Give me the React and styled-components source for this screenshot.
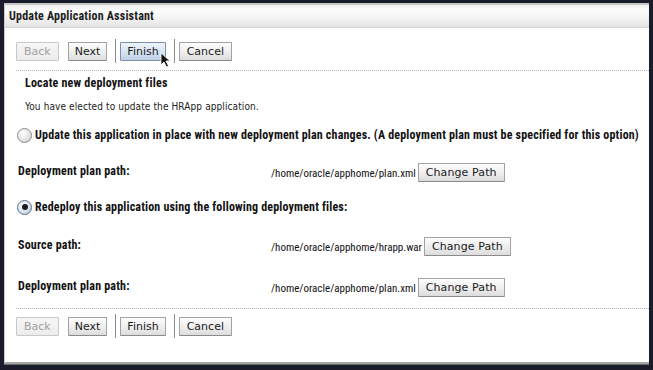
import React from 'react';
import styled, { createGlobalStyle, css } from 'styled-components';

const narrow = `"Roboto Condensed", "DejaVu Sans Condensed", "Liberation Sans", sans-serif`;
const dejavu = `"DejaVu Sans", "Liberation Sans", sans-serif`;
const dejavuCond = `"DejaVu Sans Condensed", "DejaVu Sans", sans-serif`;

const GlobalStyle = createGlobalStyle`
  html, body {
    margin: 0;
    padding: 0;
    background: #1a1c2c;
  }
  body {
    width: 653px;
    height: 370px;
    overflow: hidden;
  }
`;

/* ---> window frame */
const Panel = styled.div`
  position: relative;
  box-sizing: border-box;
  margin: 3px 0 0 4px;
  width: 645px;
  height: 361px;
  background: #fff;
  border-left: 1px solid #c9c9c9;
  border-top: 2px solid #c6c6c6;
  border-bottom: 2px solid #a4a4a4;
  box-shadow: 0 1px 0 #6a6a6a;
`;

const Header = styled.div`
  height: 22px;
  display: flex;
  align-items: center;
  padding-left: 4px;
  background: linear-gradient(#f2f2f2, #fcfcfc 30%, #e4e4e4);
  border-bottom: 1px solid #d4d4d4;
  font: bold 12px ${narrow};
  letter-spacing: 0.2px;
  color: #1e1e1e;
`;

const Body = styled.div`
  padding-left: 11px;
`;

/* ---> toolbar */
const Toolbar = styled.div`
  display: flex;
  align-items: center;
  height: 24px;
  margin-top: ${p => p.$top}px;
`;

const Button = styled.button`
  position: relative;
  box-sizing: border-box;
  height: 19px;
  padding: 0 ${p => p.$pad || 7}px;
  margin-right: ${p => p.$gap || 0}px;
  border: 1px solid #a2a2a2;
  border-bottom-color: #8a8a8a;
  border-radius: 1px;
  background: linear-gradient(#fdfdfd, #ececec 60%, #dcdcdc);
  font: 11px ${dejavu};
  letter-spacing: ${p => p.$spacing || 0}px;
  color: #1a1a1a;
  cursor: pointer;

  ${p => p.disabled && css`
    color: #a0a0a0;
    border-color: #c8c8c8;
    background: linear-gradient(#f6f6f6, #ececec);
    cursor: default;
  `}

  ${p => p.$active && css`
    border-color: #7e8ea6;
    background: linear-gradient(#eef4fb, #d6e3f2 55%, #bfd0e6);
  `}
`;

const Separator = styled.div`
  width: 1px;
  height: 24px;
  background: #8c8c8c;
  margin: 0 4px 0 8px;
`;

const Cursor = styled.svg`
  position: absolute;
  left: 39px;
  top: 9px;
  width: 11px;
  height: 16px;
  pointer-events: none;
`;

const Dotted = styled.div`
  margin-top: ${p => p.$top}px;
  border-top: 1px dotted #b4b4b4;
`;

/* ---> text */
const Heading = styled.div`
  margin: ${p => p.$top}px 0 0 9px;
  font: bold 12px ${narrow};
  letter-spacing: 0.2px;
  color: #111;
`;

const Note = styled.div`
  margin: 11px 0 0 9px;
  font: 10px ${dejavuCond};
  letter-spacing: 0.1px;
  color: #222;
`;

const Choice = styled.label`
  display: flex;
  align-items: center;
  height: 16px;
  margin: ${p => p.$top}px 0 0 1px;
  font: bold 12px ${narrow};
  letter-spacing: 0.17px;
  white-space: nowrap;
  color: #111;
`;

const Radio = styled.span`
  box-sizing: border-box;
  width: 15px;
  height: 15px;
  margin-right: 3px;
  border-radius: 50%;
  border: 1px solid #8c8c8c;
  background: radial-gradient(circle at 40% 35%, #ffffff, #e4e4e4 55%, #c2c2c2);
  display: flex;
  align-items: center;
  justify-content: center;

  ${p => p.$checked && css`
    border-color: #5a6f8c;
    background: radial-gradient(circle at 40% 35%, #ffffff, #d8e2ee 55%, #a9b9cf);
    &::after {
      content: '';
      width: 6px;
      height: 6px;
      border-radius: 50%;
      background: #1b1b1b;
    }
  `}
`;

const Field = styled.div`
  display: grid;
  grid-template-columns: 253px auto;
  align-items: center;
  height: 19px;
  margin: ${p => p.$top}px 0 0 2px;
`;

const Label = styled.div`
  font: bold 12px ${narrow};
  letter-spacing: 0.2px;
  color: #111;
  margin-top: -3px;
`;

const Value = styled.div`
  display: flex;
  align-items: center;
  gap: 2px;
  font: 11px ${narrow};
  color: #111;
`;

const Path = styled.span`
  margin-top: 2px;
`;

function WizardButtons({ top, active }) {
  return (
    <Toolbar $top={top}>
      <Button disabled $gap={9}>Back</Button>
      <Button $pad={6}>Next</Button>
      <Separator />
      <Button $active={active} $pad={6}>
        Finish
        {active && (
          <Cursor viewBox="0 0 11 16">
            <path d="M1 1 L1 13 L4 10 L6.5 15 L8.5 14 L6 9 L10 9 Z" fill="#111" stroke="#fff" strokeWidth="0.8" />
          </Cursor>
        )}
      </Button>
      <Separator />
      <Button>Cancel</Button>
    </Toolbar>
  );
}

function PathRow({ top, label, path }) {
  return (
    <Field $top={top}>
      <Label>{label}</Label>
      <Value>
        <Path>{path}</Path>
        <Button $spacing={0.1}>Change Path</Button>
      </Value>
    </Field>
  );
}

function App() {
  return (
    <>
      <GlobalStyle />
      <Panel>
        <Header>Update Application Assistant</Header>
        <Body>
          <WizardButtons top={11} active />
          <Dotted $top={7} />
          <Heading $top={5}>Locate new deployment files</Heading>
          <Note>You have elected to update the HRApp application.</Note>

          <Choice $top={15}>
            <Radio />
            Update this application in place with new deployment plan changes. (A deployment plan must be specified for this option)
          </Choice>
          <PathRow top={20} label="Deployment plan path:" path="/home/oracle/apphome/plan.xml" />

          <Choice $top={17}>
            <Radio $checked />
            Redeploy this application using the following deployment files:
          </Choice>
          <PathRow top={22} label="Source path:" path="/home/oracle/apphome/hrapp.war" />
          <PathRow top={22} label="Deployment plan path:" path="/home/oracle/apphome/plan.xml" />

          <Dotted $top={11} />
          <WizardButtons top={5} />
        </Body>
      </Panel>
    </>
  );
}

export default App;
